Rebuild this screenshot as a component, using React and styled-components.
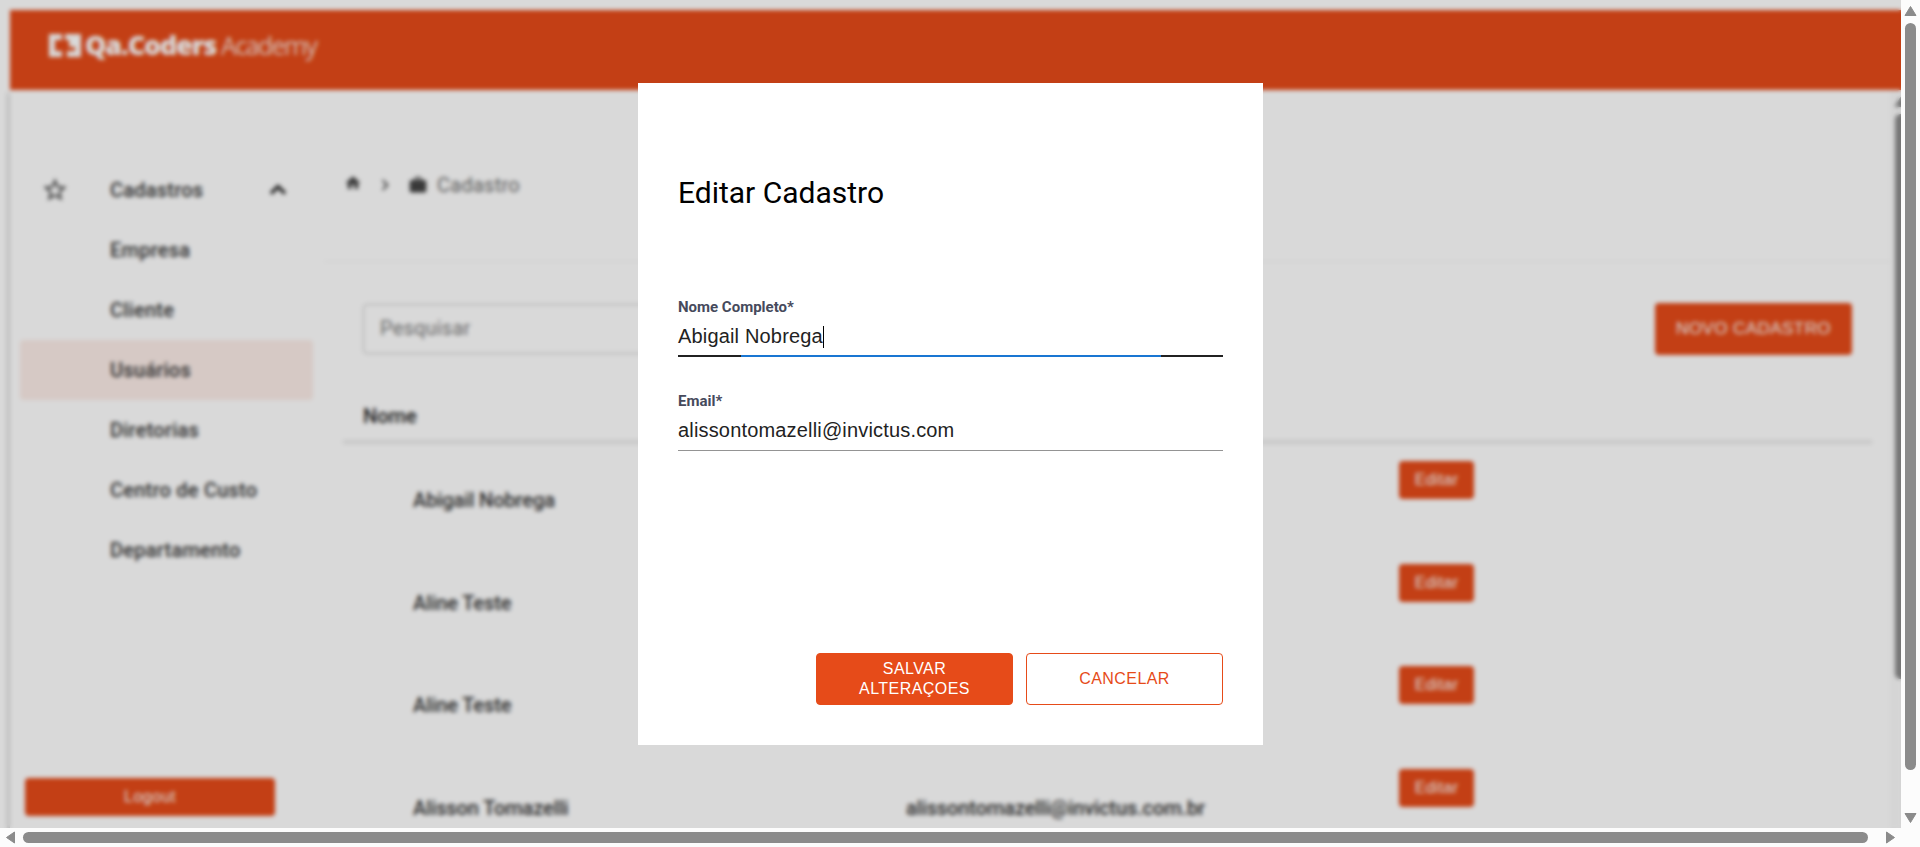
import React from "react";
import styled, { createGlobalStyle, css } from "styled-components";
import { MdStarBorder, MdHome, MdNavigateNext, MdWork } from "react-icons/md";

const ORANGE = "#e64b19";

const GlobalStyle = createGlobalStyle`
  *, *::before, *::after { box-sizing: border-box; }
  body { margin: 0; overflow: hidden; background: #fff; }
`;

const Screen = styled.div`
  display: grid;
  grid-template-columns: 1901px 19px;
  grid-template-rows: 828px 19px;
  width: 1920px;
  height: 847px;
  font-family: Roboto, sans-serif;
`;

const Viewport = styled.div`
  position: relative;
  overflow: hidden;
  background: #fff;
`;

const Page = styled.div`
  display: flex;
  flex-direction: column;
  width: 1910px;
  height: 828px;
  padding: 10px 0 0 10px;
`;

const Header = styled.header`
  position: relative;
  display: flex;
  align-items: flex-start;
  flex: none;
  height: 80px;
  padding: 16px 0 0 39px;
  background: ${ORANGE};
`;

const LogoMark = styled.svg`
  flex: none;
  margin: 8px 4px 0 0;
  fill: #fff;
`;

const LogoName = styled.span`
  width: 136px;
  color: #fff;
  font-family: "Open Sans", sans-serif;
  font-size: 27px;
  font-weight: 800;
  line-height: 38px;
  letter-spacing: -1.15px;
  white-space: nowrap;
`;

const LogoSuffix = styled.span`
  color: rgba(255, 255, 255, 0.8);
  font-family: "Open Sans", sans-serif;
  font-size: 25px;
  font-weight: 400;
  line-height: 39px;
  letter-spacing: -1.6px;
`;

const Body = styled.div`
  flex: none;
  display: flex;
  height: 738px;
  box-shadow: -3px 3px 3px rgba(0, 0, 0, 0.15);
`;

const Sidebar = styled.aside`
  display: flex;
  flex-direction: column;
  width: 314px;
  padding: 70px 11px 12px 10px;
`;

const NavItem = styled.a`
  display: flex;
  align-items: center;
  height: 60px;
  padding-left: ${(p) => (p.$root ? "21px" : "90px")};
  padding-right: 21px;
  border-radius: 4px;
  background: ${(p) => (p.$active ? "rgba(230, 75, 25, 0.1)" : "transparent")};
  color: #363636;
  font-size: 20px;
  font-weight: 500;
  letter-spacing: 0.23px;
`;

const StarIcon = styled(MdStarBorder)`
  flex: none;
  width: 28px;
  height: 28px;
  color: #444;
`;

const CollapseIcon = styled.svg`
  flex: none;
  width: 28px;
  height: 28px;
  fill: none;
  stroke: #222;
  stroke-width: 2.8px;
`;

const NavLabel = styled.span`
  flex: 1;
  margin-left: ${(p) => (p.$root ? "41px" : "0")};
`;

const Spacer = styled.div`
  flex: 1;
`;

const smallButton = css`
  border: 0;
  border-radius: 4px;
  background: ${ORANGE};
  color: #fff;
  font-family: "Liberation Sans", Arial, sans-serif;
  font-size: 16px;
  letter-spacing: 0.3px;
`;

const LogoutButton = styled.button`
  ${smallButton}
  width: 250px;
  height: 38px;
  margin-left: 5px;
  letter-spacing: 0.5px;
`;

const Content = styled.main`
  flex: none;
  width: 1566px;
`;

const Breadcrumb = styled.nav`
  display: flex;
  align-items: center;
  height: 172px;
  padding: 0 0 0 20px;
  border-bottom: 1px solid #f3f3f3;
`;

const Crumbs = styled.div`
  display: flex;
  align-items: center;
  height: 28px;
  margin-top: 18px;
  color: #444;
  svg { flex: none; }
  svg:first-child { margin-bottom: 4px; }
`;

const CrumbArrow = styled(MdNavigateNext)`
  margin: 0 12px;
`;

const CrumbText = styled.span`
  margin-left: 9px;
  color: #6c6c6c;
  font-size: 20px;
  letter-spacing: 0.25px;
`;

const Toolbar = styled.div`
  display: flex;
  justify-content: space-between;
  align-items: center;
  height: 52px;
  margin: 41px 38px 0 39px;
`;

const Search = styled.div`
  display: flex;
  align-items: center;
  width: 400px;
  height: 50px;
  padding: 0 0 2px 16px;
  border: 1px solid #c4c4c4;
  border-radius: 4px;
  color: #7a7a7a;
  font-size: 20px;
  letter-spacing: 0.2px;
`;

const NewButton = styled.button`
  ${smallButton}
  width: 197px;
  height: 52px;
  font-size: 17px;
  letter-spacing: 0.45px;
`;

const Table = styled.section`
  margin: 0 18px 0 19px;
`;

const TableHead = styled.div`
  display: flex;
  align-items: center;
  height: 89px;
  padding: 36px 0 0 20px;
  border-bottom: 4px solid #ebebeb;
  color: #222;
  font-size: 20px;
  font-weight: 500;
`;

const Row = styled.div`
  display: grid;
  grid-template-columns: 493px 493px auto;
  align-items: start;
  height: 102.6px;
  padding: 17px 0 0 70px;
  color: #333;
  font-size: 20px;
  font-weight: 500;
  letter-spacing: -0.1px;
`;

const Cell = styled.span`
  margin-top: 27px;
  line-height: 24px;
`;

const EditButton = styled.button`
  ${smallButton}
  width: 75px;
  height: 38px;
`;

const InnerScrollbar = styled.div`
  flex: none;
  display: flex;
  flex-direction: column;
  align-items: center;
  width: 20px;
  padding-top: 7px;
  background: #fbfbfb;
`;

const Thumb = styled.div`
  flex: none;
  width: ${(p) => p.$w}px;
  height: ${(p) => p.$h}px;
  border-radius: 6px;
  background: #8b8b8b;
`;

const InnerThumb = styled(Thumb)`
  margin-top: 7px;
`;

const VerticalBar = styled.div`
  display: flex;
  flex-direction: column;
  align-items: center;
  padding: 6px 0 5px;
  background: #fcfcfc;
  gap: 7px;
`;

const HorizontalBar = styled.div`
  display: flex;
  align-items: center;
  padding: 0 6px;
  background: #fcfcfc;
  gap: 8px;
`;

const Corner = styled.div`
  background: #fcfcfc;
`;

const Overlay = styled.div`
  position: absolute;
  inset: 0;
  z-index: 10;
  display: flex;
  align-items: center;
  justify-content: center;
  background: rgba(0, 0, 0, 0.15);
  backdrop-filter: blur(2px);
`;

const Modal = styled.div`
  display: flex;
  flex-direction: column;
  width: 625px;
  height: 662px;
  padding: 92px 40px 40px;
  background: #fff;
`;

const Title = styled.h1`
  margin: 0 0 84px;
  color: #000;
  font-size: 30px;
  font-weight: 400;
  line-height: 36px;
`;

const Field = styled.div`
  display: flex;
  flex-direction: column;
  margin-bottom: 32px;
`;

const FieldLabel = styled.label`
  height: 24px;
  color: #464a5c;
  font-size: 15px;
  font-weight: 700;
  line-height: 24px;
`;

const FieldValue = styled.div`
  display: flex;
  align-items: center;
  height: 35px;
  color: #222;
  font-family: "Liberation Sans", Arial, sans-serif;
  font-size: 20px;
  letter-spacing: 0.17px;
`;

const Caret = styled.span`
  width: 1px;
  height: 22px;
  background: #000;
`;

const Underline = styled.div`
  display: flex;
  justify-content: center;
  height: ${(p) => (p.$focused ? 2 : 1)}px;
  margin-top: ${(p) => (p.$focused ? 1 : 2)}px;
  background: ${(p) => (p.$focused ? "#212121" : "#949494")};
`;

const FocusLine = styled.div`
  width: 420px;
  height: 2px;
  background: #1976d2;
`;

const Actions = styled.div`
  display: flex;
  justify-content: flex-end;
  gap: 13px;
  margin-top: auto;
`;

const ActionButton = styled.button`
  width: 197px;
  height: 52px;
  padding: 0 30px;
  border: 1px solid ${ORANGE};
  border-radius: 4px;
  background: ${(p) => (p.$primary ? ORANGE : "#fff")};
  color: ${(p) => (p.$primary ? "#fff" : ORANGE)};
  font-family: "Liberation Sans", Arial, sans-serif;
  font-size: 16px;
  line-height: 20px;
  letter-spacing: 0.45px;
`;

const ArrowSvg = styled.svg`
  flex: none;
  fill: #8b8b8b;
  stroke: #8b8b8b;
  stroke-linejoin: round;
`;

const arrowPoints = {
  up: "6.5,0.5 12,9.5 1,9.5",
  down: "1,0.5 12,0.5 6.5,9.5",
  left: "0.5,6.5 8.5,1 8.5,12",
  right: "0.5,1 0.5,12 8.5,6.5",
};

const Arrow = ({ dir }) => {
  const vertical = dir === "up" || dir === "down";
  return (
    <ArrowSvg width={vertical ? 13 : 9} height={vertical ? 10 : 13}>
      <polygon points={arrowPoints[dir]} />
    </ArrowSvg>
  );
};

const Logo = () => (
  <>
    <LogoMark width="32" height="23" viewBox="0 0 32 23">
      <path d="M0 0h13v6H6v11h7v6H0z" />
      <path d="M16 0h16v23H18v-6h8v-4h-6V6h-4z" />
    </LogoMark>
    <LogoName>Qa.Coders</LogoName>
    <LogoSuffix>Academy</LogoSuffix>
  </>
);

const navItems = ["Empresa", "Cliente", "Usuários", "Diretorias", "Centro de Custo", "Departamento"];

const rows = [
  { name: "Abigail Nobrega", email: "" },
  { name: "Aline Teste", email: "" },
  { name: "Aline Teste", email: "" },
  { name: "Alisson Tomazelli", email: "alissontomazelli@invictus.com.br" },
];

export default function App() {
  return (
    <>
      <GlobalStyle />
      <Screen>
        <Viewport>
          <Page>
            <Header><Logo /></Header>
            <Body>
              <Sidebar>
                <NavItem $root>
                  <StarIcon />
                  <NavLabel $root>Cadastros</NavLabel>
                  <CollapseIcon viewBox="0 0 24 24">
                    <path d="M6 15l6-6 6 6" />
                  </CollapseIcon>
                </NavItem>
                {navItems.map((item) => (
                  <NavItem key={item} $active={item === "Usuários"}>
                    <NavLabel>{item}</NavLabel>
                  </NavItem>
                ))}
                <Spacer />
                <LogoutButton>Logout</LogoutButton>
              </Sidebar>
              <Content>
                <Breadcrumb>
                  <Crumbs>
                    <MdHome size={18} />
                    <CrumbArrow size={22} />
                    <MdWork size={20} />
                    <CrumbText>Cadastro</CrumbText>
                  </Crumbs>
                </Breadcrumb>
                <Toolbar>
                  <Search>Pesquisar</Search>
                  <NewButton>NOVO CADASTRO</NewButton>
                </Toolbar>
                <Table>
                  <TableHead>Nome</TableHead>
                  {rows.map((row, i) => (
                    <Row key={i}>
                      <Cell>{row.name}</Cell>
                      <Cell>{row.email}</Cell>
                      <EditButton>Editar</EditButton>
                    </Row>
                  ))}
                </Table>
              </Content>
              <InnerScrollbar>
                <Arrow dir="up" />
                <InnerThumb $w={11} $h={565} />
              </InnerScrollbar>
            </Body>
          </Page>
          <Overlay>
            <Modal>
              <Title>Editar Cadastro</Title>
              <Field>
                <FieldLabel>Nome Completo*</FieldLabel>
                <FieldValue>Abigail Nobrega<Caret /></FieldValue>
                <Underline $focused><FocusLine /></Underline>
              </Field>
              <Field>
                <FieldLabel>Email*</FieldLabel>
                <FieldValue>alissontomazelli@invictus.com</FieldValue>
                <Underline />
              </Field>
              <Actions>
                <ActionButton $primary>SALVAR ALTERAÇOES</ActionButton>
                <ActionButton>CANCELAR</ActionButton>
              </Actions>
            </Modal>
          </Overlay>
        </Viewport>
        <VerticalBar>
          <Arrow dir="up" />
          <Thumb $w={11} $h={747} />
          <Spacer />
          <Arrow dir="down" />
        </VerticalBar>
        <HorizontalBar>
          <Arrow dir="left" />
          <Thumb $w={1845} $h={11} />
          <Spacer />
          <Arrow dir="right" />
        </HorizontalBar>
        <Corner />
      </Screen>
    </>
  );
}
